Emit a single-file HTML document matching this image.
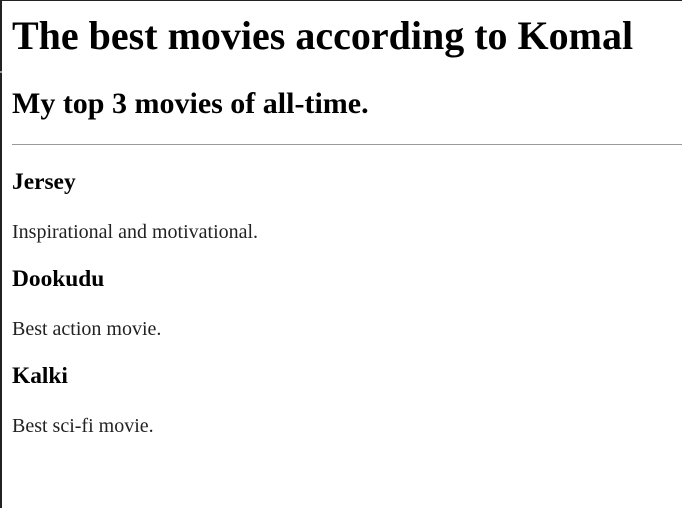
<!DOCTYPE html>
<html><head><style>
html,body{margin:0;padding:0;background:#fff;width:682px;height:508px;overflow:hidden;position:relative;font-family:"Liberation Serif",serif;color:#000}
.b{position:absolute;white-space:nowrap;line-height:1;left:12px;margin:0}
h1.b{font-size:40px;font-weight:bold}
h2.b{font-size:30px;font-weight:bold}
h3.b{font-size:23.4px;font-weight:bold}
p.b{font-size:20px;color:#222}
</style></head><body>
<div style="position:absolute;left:0;top:0;width:682px;height:1px;background:#222"></div>
<div style="position:absolute;left:0;top:0;width:2px;height:508px;background:#222"></div>
<div style="position:absolute;left:0;top:71px;width:2px;height:2px;background:#999"></div>
<h1 class="b" style="top:16px">The best movies according to Komal</h1>
<h2 class="b" style="top:89px">My top 3 movies of all-time.</h2>
<div style="position:absolute;left:12px;top:144px;width:670px;height:1px;background:#999"></div>
<h3 class="b" style="top:171px">Jersey</h3>
<p class="b" style="top:222px">Inspirational and motivational.</p>
<h3 class="b" style="top:268px">Dookudu</h3>
<p class="b" style="top:319px">Best action movie.</p>
<h3 class="b" style="top:365px">Kalki</h3>
<p class="b" style="top:416px">Best sci-fi movie.</p>
</body></html>
